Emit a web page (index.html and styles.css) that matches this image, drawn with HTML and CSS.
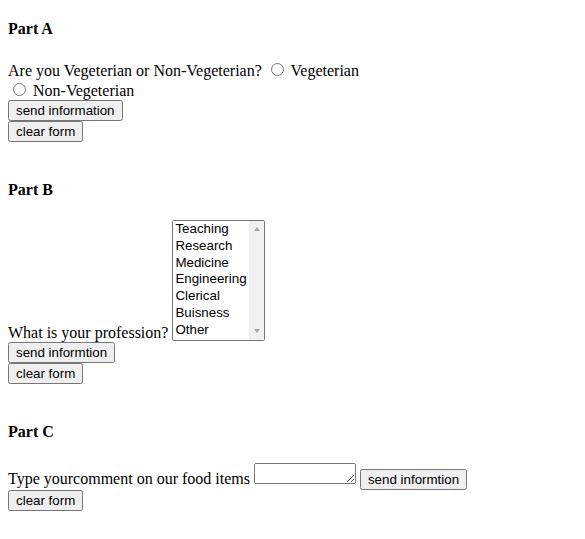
FILE: index.html
```html
<!DOCTYPE html>
<html>
<head>
<meta charset="utf-8">
<title>Forms</title>
<link rel="stylesheet" href="styles.css">
</head>
<body class="page">
<h4 class="part part-first">Part A</h4>
<form class="form">
Are you Vegeterian or Non-Vegeterian? <input type="radio" name="diet" class="radio"> Vegeterian<br>
<input type="radio" name="diet" class="radio"> Non-Vegeterian<br>
<input type="button" class="btn" value="send information"><br>
<input type="reset" class="btn" value="clear form">
</form>
<h4 class="part part-tight">Part B</h4>
<form class="form">
What is your profession? <span class="listwrap"><select class="listbox" size="7">
<option>Teaching</option>
<option>Research</option>
<option>Medicine</option>
<option>Engineering</option>
<option>Clerical</option>
<option>Buisness</option>
<option>Other</option>
</select><span class="scrollbar"><span class="sb-btn"><span class="arrow arrow-up"></span></span><span class="sb-btn"><span class="arrow arrow-down"></span></span></span></span><br>
<input type="button" class="btn" value="send informtion"><br>
<input type="reset" class="btn" value="clear form">
</form>
<h4 class="part">Part C</h4>
<form class="form">
Type yourcomment on our food items <textarea class="comment" rows="1"></textarea> <input type="button" class="btn" value="send informtion"><br>
<input type="reset" class="btn" value="clear form">
</form>
</body>
</html>
```
FILE: styles.css
```css
.page {
  margin: 0;
  padding: 0 8px 8px 8px;
  font-family: "Liberation Serif", "Times New Roman", serif;
  font-size: 16px;
  color: #000;
}
.page::before {
  content: "";
  display: table;
}
.part {
  font-size: 16px;
  font-weight: bold;
  margin: 22.28px 0;
}
.part-first {
  margin-top: 20px;
}
.part-tight {
  margin-bottom: 20.28px;
}
.form {
  margin: 0 0 39px 0;
}
.btn,
.listbox,
.comment {
  font-family: "Liberation Sans", Arial, sans-serif;
  font-size: 13.333px;
}
.listwrap {
  display: inline-flex;
  vertical-align: text-bottom;
  border: 1px solid #767676;
  border-radius: 2px;
  background: #fff;
}
.listbox {
  width: 76px;
  height: 119px;
  border: 0;
  padding: 0;
  margin: 0;
  outline: none;
  overflow: hidden;
  background: #fff;
}
.scrollbar {
  width: 15px;
  background: #f1f1f1;
  display: flex;
  flex-direction: column;
  justify-content: space-between;
}
.sb-btn {
  height: 17px;
  display: flex;
  align-items: center;
  justify-content: center;
}
.arrow {
  width: 0;
  height: 0;
  border-left: 3.5px solid transparent;
  border-right: 3.5px solid transparent;
}
.arrow-up {
  border-bottom: 4px solid #a3a3a3;
}
.arrow-down {
  border-top: 4px solid #a3a3a3;
}
.comment {
  width: 96px;
  height: 15px;
}
```
